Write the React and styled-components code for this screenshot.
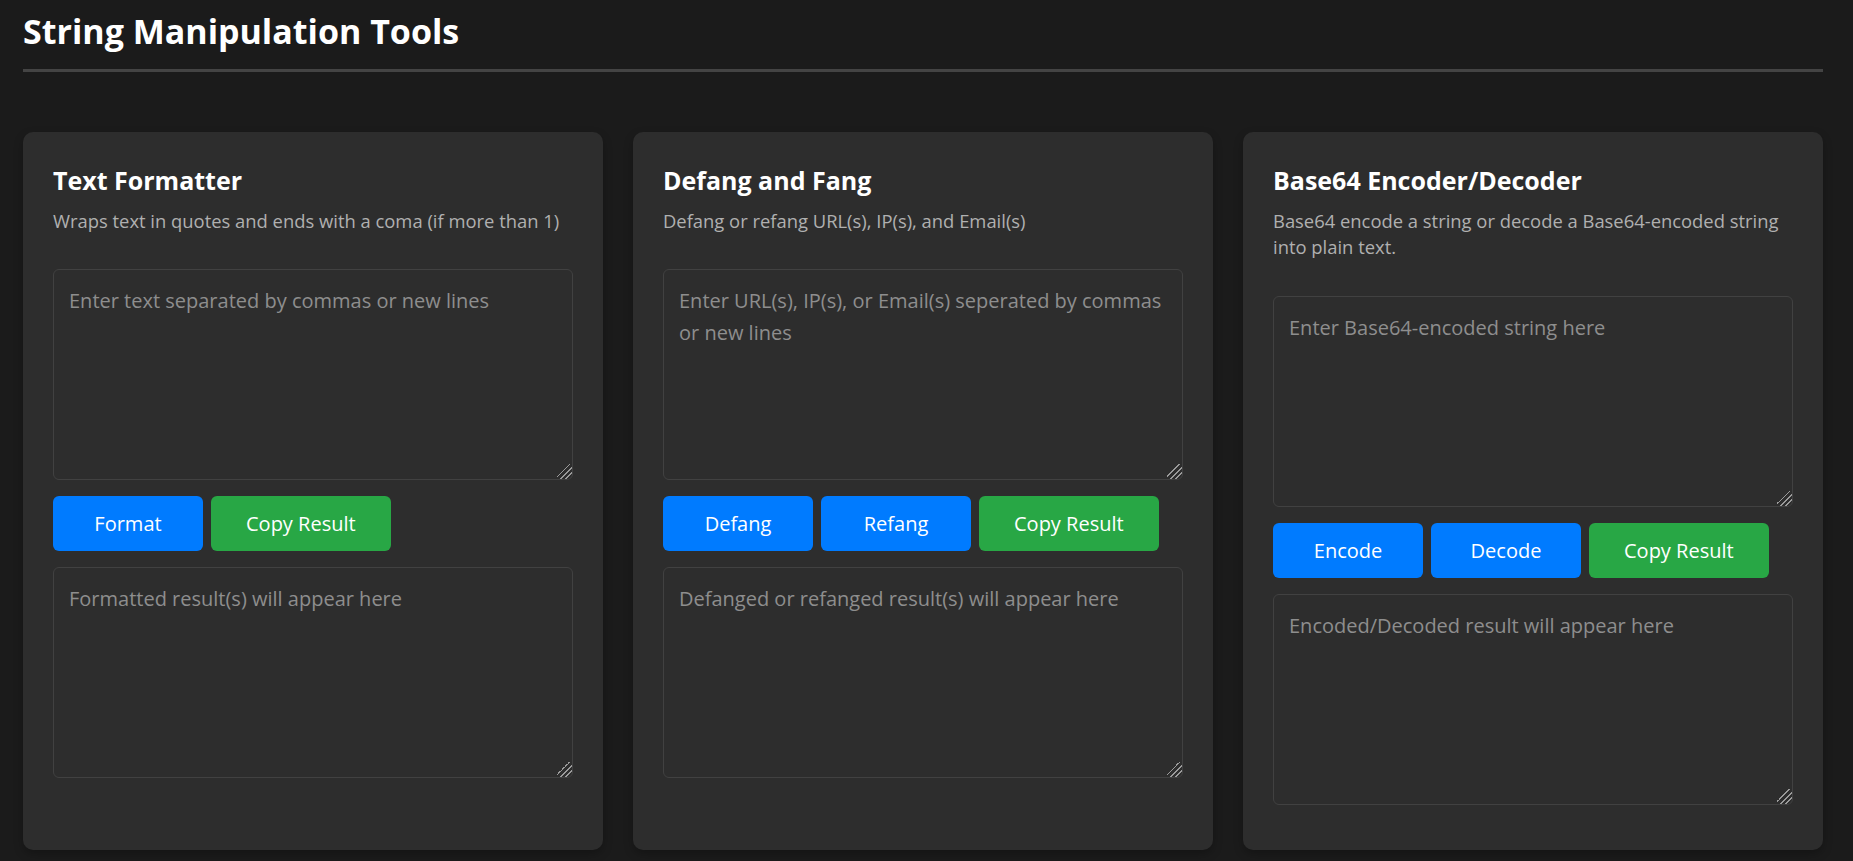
import React from 'react';
import styled, { createGlobalStyle } from 'styled-components';

const GlobalStyle = createGlobalStyle`
  html, body {
    margin: 0;
    padding: 0;
    background: #1b1b1b;
  }
  body {
    font-family: "Segoe UI", "Open Sans", "Noto Sans", sans-serif;
    color: #ffffff;
  }
  *, *::before, *::after {
    box-sizing: border-box;
  }
`;

const Page = styled.div`
  min-height: 861px;
  padding: 0 30px 0 23px;
`;

const Header = styled.header`
  padding-top: 8px;
  padding-bottom: 14px;
  border-bottom: 3px solid #444444;
`;

const Title = styled.h1`
  margin: 0;
  font-size: 34px;
  line-height: 47px;
  font-weight: 700;
  color: #ffffff;
`;

const Grid = styled.main`
  display: grid;
  grid-template-columns: repeat(3, 1fr);
  gap: 30px;
  margin-top: 60px;
`;

const Card = styled.section`
  display: flex;
  flex-direction: column;
  background: #2d2d2d;
  border-radius: 10px;
  padding: 30px;
  box-shadow: 0 4px 10px rgba(0, 0, 0, 0.25);
`;

const CardTitle = styled.h2`
  margin: 0;
  font-size: 25px;
  line-height: 36px;
  font-weight: 700;
  color: #ffffff;
`;

const CardDesc = styled.p`
  margin: 10px 0 35px;
  font-size: 18.4px;
  line-height: 26.25px;
  color: #b0b0b0;
`;

const TextBox = styled.textarea`
  display: block;
  width: 100%;
  height: 211px;
  margin: 0 0 ${(p) => (p.$last ? '15px' : '16px')};
  padding: 15px;
  border: 1px solid #414141;
  border-radius: 6px;
  background: #2d2d2d;
  color: #e0e0e0;
  color-scheme: dark;
  font-family: inherit;
  font-size: 20px;
  line-height: 32px;
  resize: vertical;
  outline: none;

  &::placeholder {
    color: #8e8e8e;
  }

  &::-webkit-resizer {
    background: linear-gradient(
      135deg,
      transparent 0 40%,
      #9a9a9a 40% 46%,
      transparent 46% 58%,
      #9a9a9a 58% 64%,
      transparent 64% 76%,
      #9a9a9a 76% 82%,
      transparent 82%
    );
  }
`;

const ButtonRow = styled.div`
  display: flex;
  gap: 8px;
  margin-bottom: 16px;
`;

const Button = styled.button`
  height: 55px;
  min-width: 150px;
  padding: 0 35px;
  border: none;
  border-radius: 6px;
  background: ${(p) => (p.$variant === 'success' ? '#28a745' : '#007bff')};
  color: #ffffff;
  font-family: inherit;
  font-size: 20px;
  font-weight: 400;
  cursor: pointer;
`;

const tools = [
  {
    title: 'Text Formatter',
    desc: 'Wraps text in quotes and ends with a coma (if more than 1)',
    input: 'Enter text separated by commas or new lines',
    actions: ['Format'],
    output: 'Formatted result(s) will appear here',
  },
  {
    title: 'Defang and Fang',
    desc: 'Defang or refang URL(s), IP(s), and Email(s)',
    input: 'Enter URL(s), IP(s), or Email(s) seperated by commas or new lines',
    actions: ['Defang', 'Refang'],
    output: 'Defanged or refanged result(s) will appear here',
  },
  {
    title: 'Base64 Encoder/Decoder',
    desc: 'Base64 encode a string or decode a Base64-encoded string into plain text.',
    input: 'Enter Base64-encoded string here',
    actions: ['Encode', 'Decode'],
    output: 'Encoded/Decoded result will appear here',
  },
];

export default function App() {
  return (
    <>
      <GlobalStyle />
      <Page>
        <Header>
          <Title>String Manipulation Tools</Title>
        </Header>
        <Grid>
          {tools.map((t) => (
            <Card key={t.title}>
              <CardTitle>{t.title}</CardTitle>
              <CardDesc>{t.desc}</CardDesc>
              <TextBox placeholder={t.input} />
              <ButtonRow>
                {t.actions.map((a) => (
                  <Button key={a}>{a}</Button>
                ))}
                <Button $variant="success">Copy Result</Button>
              </ButtonRow>
              <TextBox $last placeholder={t.output} readOnly />
            </Card>
          ))}
        </Grid>
      </Page>
    </>
  );
}
